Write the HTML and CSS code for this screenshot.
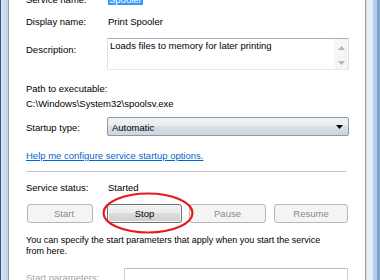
FILE: index.html
```html
<!DOCTYPE html>
<html lang="en">

<head>
    <meta charset="UTF-8">
    <title>Print Spooler Properties</title>
    <link rel="stylesheet" href="styles.css">
</head>

<body>

    <div class="window">
        <!-- Left window frame -->
        <div class="frame-left"></div>

        <!-- General tab page -->
        <div class="page">
            <div class="row row-first">
                <span class="label">Service name:</span>
                <span class="value"><span class="selected">Spooler</span></span>
            </div>

            <div class="row row-display">
                <span class="label">Display name:</span>
                <span class="value">Print Spooler</span>
            </div>

            <div class="row row-desc">
                <span class="label label-desc">Description:</span>
                <div class="desc-box">
                    <div class="desc-text">Loads files to memory for later printing</div>
                    <div class="scrollbar">
                        <svg width="7" height="4" viewBox="0 0 7 4"><path d="M0 4 L3.5 0 L7 4 Z" fill="#b4b4b4"/></svg>
                        <svg width="7" height="4" viewBox="0 0 7 4"><path d="M0 0 L3.5 4 L7 0 Z" fill="#b4b4b4"/></svg>
                    </div>
                </div>
            </div>

            <div class="row row-path-label">Path to executable:</div>
            <div class="row row-path">C:\Windows\System32\spoolsv.exe</div>

            <div class="row row-startup">
                <span class="label label-startup">Startup type:</span>
                <div class="combo">
                    <span>Automatic</span>
                    <svg width="7" height="4" viewBox="0 0 7 4"><path d="M0 0 L3.5 4 L7 0 Z" fill="#000"/></svg>
                </div>
            </div>

            <a href="#" class="help-link">Help me configure service startup options.</a>

            <div class="separator"></div>

            <div class="row row-status">
                <span class="label">Service status:</span>
                <span class="value">Started</span>
            </div>

            <div class="buttons">
                <button class="btn btn-start" disabled>Start</button>
                <button class="btn btn-stop">Stop</button>
                <button class="btn btn-pause" disabled>Pause</button>
                <button class="btn btn-resume" disabled>Resume</button>

                <!-- red highlight round the Stop button -->
                <svg class="highlight" width="96" height="44" viewBox="0 0 96 44">
                    <ellipse cx="47" cy="21" rx="44.5" ry="19.5" fill="none" stroke="#e31b1b" stroke-width="2.2"/>
                </svg>
            </div>

            <p class="note">You can specify the start parameters that apply when you start the service<br>from here.</p>

            <div class="row row-params">
                <span class="label label-params">Start parameters:</span>
                <div class="params-box"></div>
            </div>
        </div>

        <!-- Right window frame -->
        <div class="frame-right"></div>
    </div>

</body>

</html>
```

FILE: styles.css
```css
body {
    margin: 0;
    font-family: "Liberation Sans", Arial, sans-serif;
    font-size: 9.5px;
    color: #000;
    background: #fff;
}

.window {
    display: flex;
    height: 280px;
    overflow: hidden;
}

/* Window frame */
.frame-left {
    width: 8px;
    flex: none;
    background: linear-gradient(to right, #3b5573 0, #3b5573 1px, #d6e4f3 1px, #bdd4ec 8px);
}

.frame-right {
    width: 14px;
    flex: none;
    background: linear-gradient(to right, #d8dde3 0, #d8dde3 1px, #e8f0f8 1px, #e2ecf7 7px, #b8d0ea 7px, #b3cce8 11px, #7ea3c9 11px);
}

.page {
    flex: 1;
    position: relative;
    background: #fff;
    border-left: 1px solid #9c9c9c;
    border-right: 1px solid #a0a0a0;
    padding: 0 16px 0 17px;
}

/* Rows */
.row {
    display: flex;
    height: 11px;
    line-height: 11px;
}

.label {
    width: 81px;
    flex: none;
}

.row-first {
    margin-top: -6px;
}

.selected {
    display: inline-block;
    background: #3399ff;
    color: #fff;
    padding: 0 1px;
}

.value {
    padding-left: 1px;
}

.row-display {
    margin-top: 11px;
}

.row-desc {
    margin-top: 11px;
    height: 32px;
}

.label-desc {
    padding-top: 6px;
}

.desc-box {
    width: 242px;
    height: 32px;
    box-sizing: border-box;
    border: 1px solid;
    border-color: #abadb3 #dbdfe6 #e3e9ef #e2e3ea;
    display: flex;
}

.desc-text {
    flex: 1;
    padding: 1px 0 0 2px;
}

.scrollbar {
    width: 14px;
    background: #f6f6f6;
    display: flex;
    flex-direction: column;
    align-items: center;
    padding-top: 7px;
    gap: 11px;
    box-sizing: border-box;
}

.scrollbar svg {
    display: block;
}

.row-path-label {
    margin-top: 13px;
}

.row-path {
    margin-top: 4px;
}

/* Startup type combo box */
.row-startup {
    margin-top: 8px;
    height: 19px;
}

.label-startup {
    padding-top: 5px;
}

.combo {
    width: 242px;
    height: 19px;
    box-sizing: border-box;
    border: 1px solid #8d99a6;
    border-radius: 2px;
    background: linear-gradient(#f1f4f7 0, #e6ebf0 50%, #d8e0e8 50%, #ccd6e0 100%);
    display: flex;
    align-items: center;
    justify-content: space-between;
    padding: 1px 5px 0 4px;
}

.help-link {
    display: block;
    margin-top: 14px;
    line-height: 11px;
    color: #0066cc;
    text-decoration: underline;
    width: max-content;
}

.separator {
    margin: 10px 3px 0 0;
    border-top: 1px solid #c3c3c3;
}

.row-status {
    margin-top: 10px;
}

/* Service control buttons */
.buttons {
    position: relative;
    display: flex;
    margin-top: 11px;
    padding-left: 1px;
    gap: 7px;
}

.btn {
    height: 19px;
    width: 75px;
    box-sizing: border-box;
    font-family: inherit;
    font-size: 9.5px;
    color: #000;
    border: 1px solid #707070;
    border-radius: 3px;
    background: linear-gradient(#f2f2f2 0, #ebebeb 50%, #dddddd 50%, #cfcfcf 100%);
    box-shadow: inset 0 0 0 1px #f8f8f8;
    padding: 0;
}

.btn:disabled {
    color: #8a8a8a;
    border-color: #b5b8ba;
    background: #f4f4f4;
    box-shadow: none;
}

.btn-start {
    width: 66px;
    padding-left: 8px;
    margin-right: 7px;
}

.btn-pause {
    width: 77px;
}

.btn-resume {
    width: 74px;
    margin-left: 1px;
}

.highlight {
    position: absolute;
    left: 75px;
    top: -12px;
}

.note {
    margin: 12px 0 0;
    line-height: 11px;
    font-size: 9px;
}

.row-params {
    margin-top: 11px;
    height: 22px;
}

.label-params {
    width: 98px;
    padding-top: 4px;
    color: #a3a3a3;
}

.params-box {
    width: 224px;
    height: 22px;
    box-sizing: border-box;
    border: 1px solid #cfcfcf;
    border-top-color: #bcbcbc;
}
```
